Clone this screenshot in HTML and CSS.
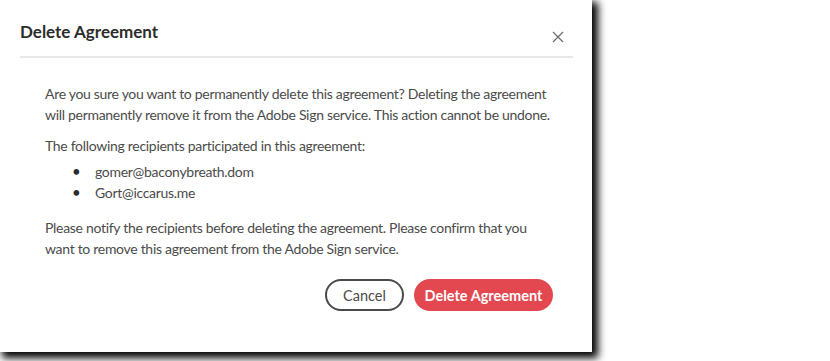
FILE: index.html
```html
<!DOCTYPE html>
<html>
<head>
<meta charset="utf-8">
<link rel="stylesheet" href="styles.css">
</head>
<body>
<div class="page">
<div class="dialog">
  <div class="header">
    <h1 class="title">Delete Agreement</h1>
    <button class="close" aria-label="Close">
      <svg width="12" height="12" viewBox="0 0 12 12"><path d="M1 1 L11 11 M11 1 L1 11" stroke="#6e6e6e" stroke-width="1.3" fill="none"/></svg>
    </button>
  </div>
  <div class="content">
    <p class="para">Are you sure you want to permanently delete this agreement? Deleting the agreement will permanently remove it from the Adobe Sign service. This action cannot be undone.</p>
    <p class="para para-lead">The following recipients participated in this agreement:</p>
    <ul class="list">
      <li>gomer@baconybreath.dom</li>
      <li>Gort@iccarus.me</li>
    </ul>
    <p class="para">Please notify the recipients before deleting the agreement. Please confirm that you want to remove this agreement from the Adobe Sign service.</p>
    <div class="actions">
      <button class="btn btn-cancel">Cancel</button>
      <button class="btn btn-delete">Delete Agreement</button>
    </div>
  </div>
</div>
</div>
</body>
</html>
```
FILE: styles.css
```css
html, body { margin: 0; padding: 0; background: #fff; }
body { font-family: Lato, "Open Sans", sans-serif; color: #4b4b4b; }
.page { height: 361px; display: flow-root; }
.dialog {
  width: 592px; height: 352px; box-sizing: border-box; background: #fff;
  box-shadow: 4px 4px 8px 2px #000; display: flow-root;
}
.header {
  margin: 0 19px 0 20px; height: 58px; box-sizing: border-box; border-bottom: 2px solid #e8e8e8;
  display: flex; justify-content: space-between; align-items: flex-start;
}
.title { margin: 22px 0 0; font-size: 17px; font-weight: 700; color: #2c2c2c; line-height: 20px; }
.close { margin: 31px 9px 0 0; padding: 0; border: 0; background: none; width: 12px; height: 12px; display: flex; }
.content { padding: 25px 36px 0 45px; font-size: 14px; line-height: 21px; letter-spacing: -0.3px; }
.para { margin: 0 0 10px; }
.para-lead { margin-bottom: 5px; }
.list { margin: 0 0 14px; padding-left: 27px; list-style: none; }
.list li { line-height: 21px; display: flex; }
.list li::before { content: "\2022"; width: 23px; font-size: 15px; color: #2c2c2c; }
.actions { display: flex; justify-content: flex-end; gap: 10px; margin-top: 20px; padding-right: 3px; letter-spacing: 0; }
.btn { height: 32px; border-radius: 16px; font-family: inherit; font-size: 14.5px; box-sizing: border-box; padding: 0; white-space: nowrap; }
.btn-cancel { width: 79px; background: #fff; border: 2px solid #4b4b4b; color: #4b4b4b; }
.btn-delete { width: 139px; background: #e34850; border: 0; color: #fff; font-weight: 700; }
```
